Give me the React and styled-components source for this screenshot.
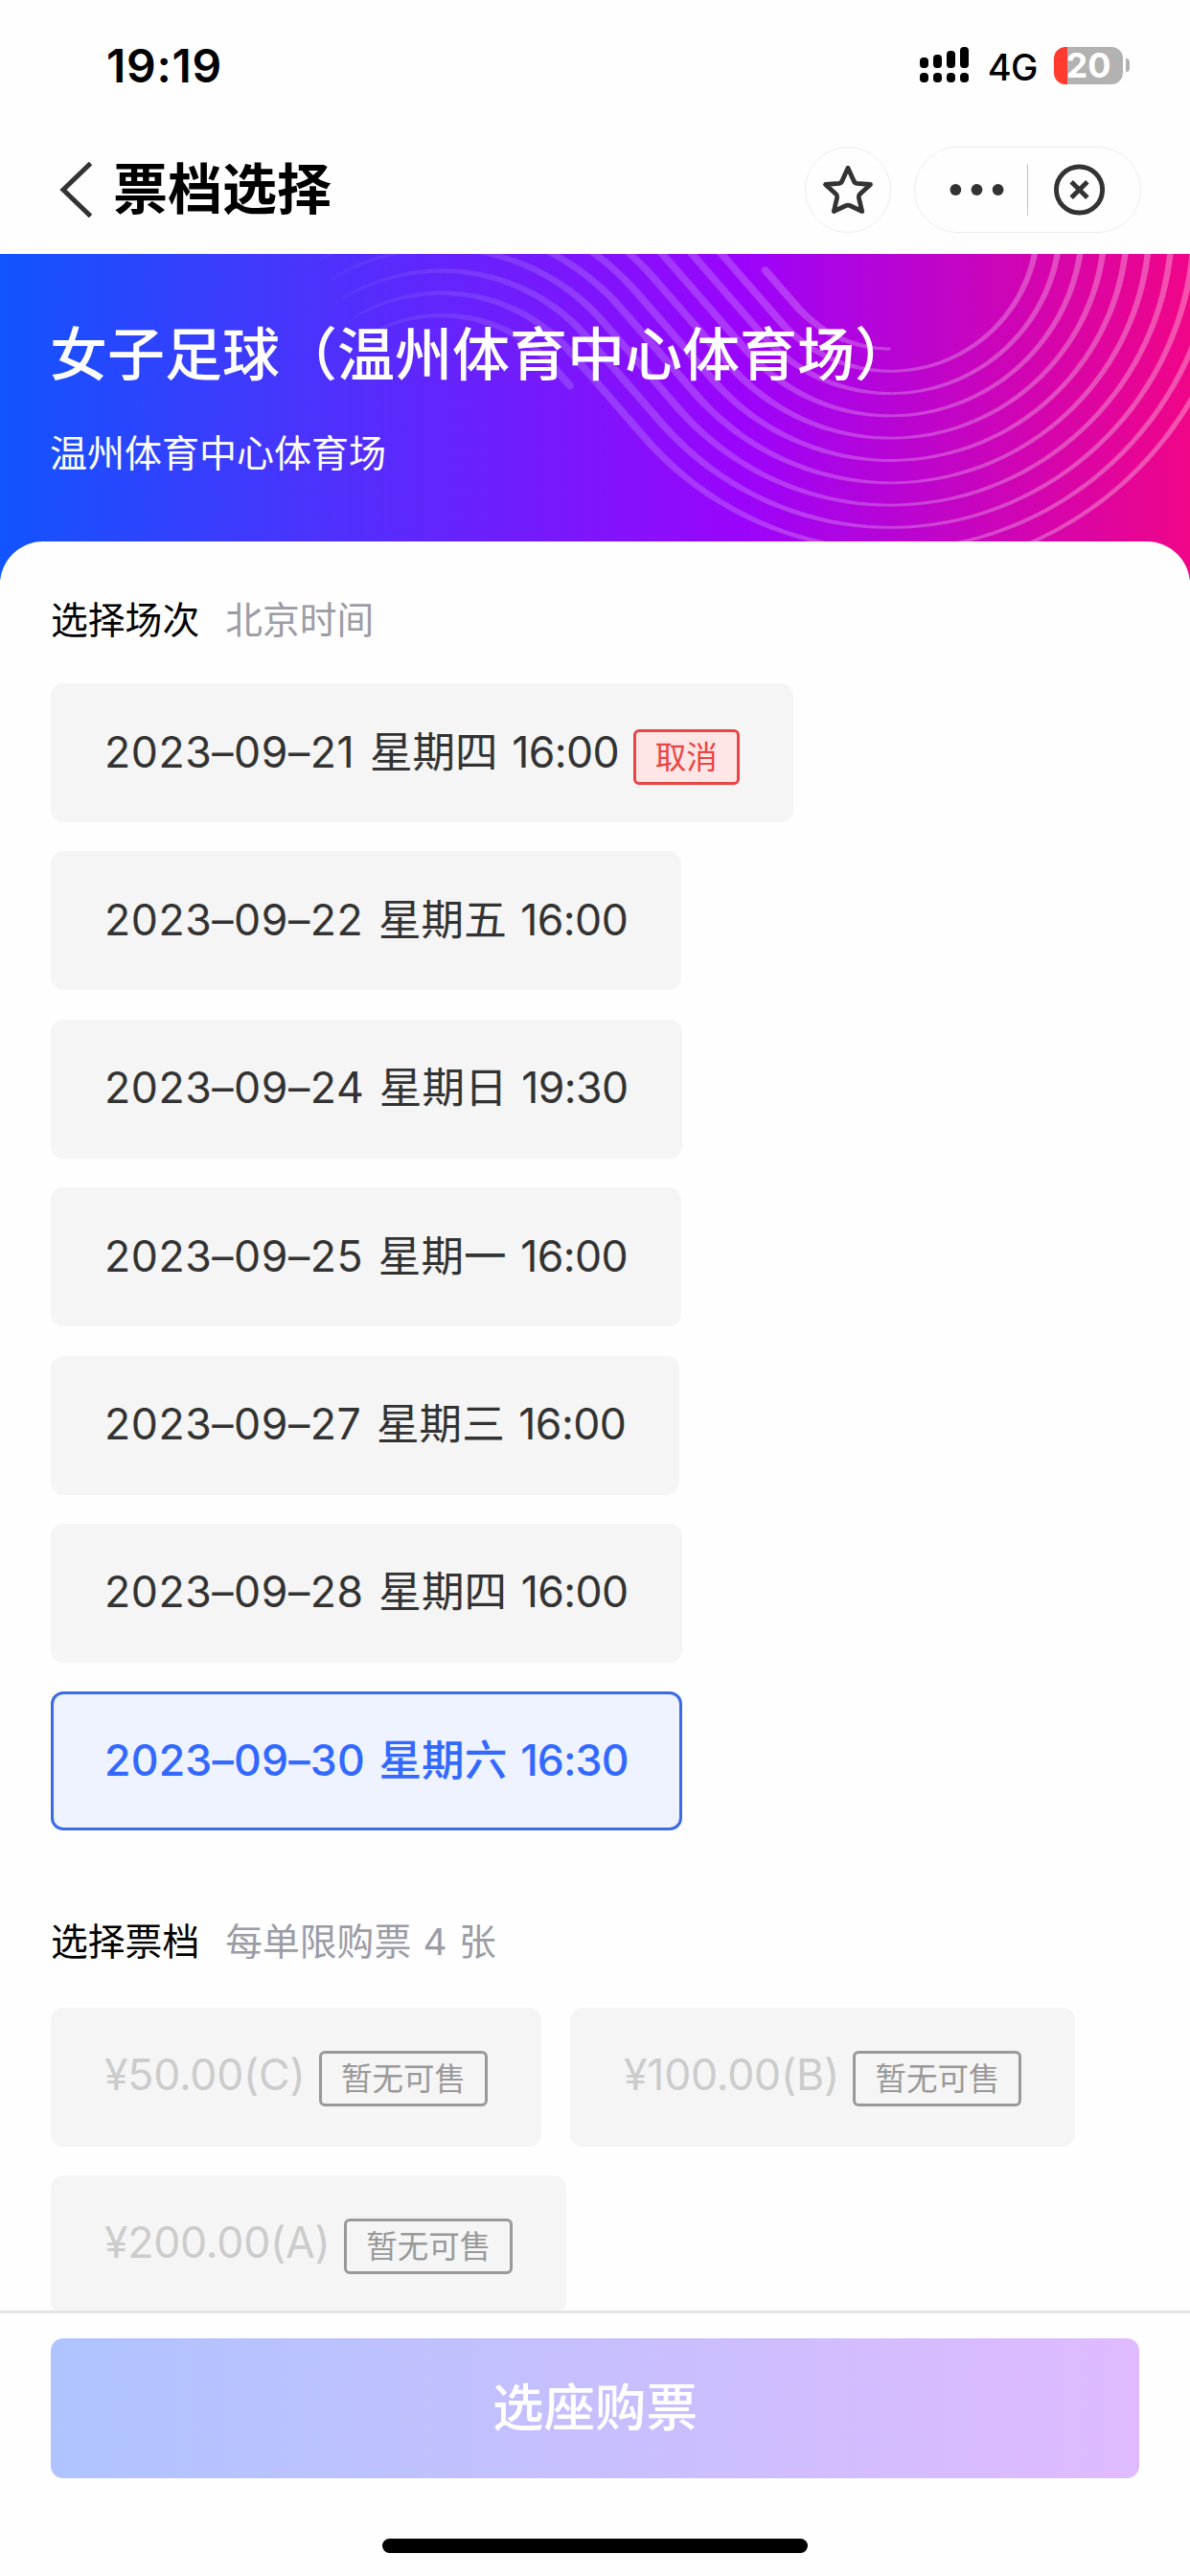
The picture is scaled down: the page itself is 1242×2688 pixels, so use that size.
import React, { useState } from "react";
import styled, { createGlobalStyle, css } from "styled-components";

const GlobalStyle = createGlobalStyle`
  * {
    box-sizing: border-box;
  }

  body {
    margin: 0;
    background: #fefefe;
    font-family: Inter, "Noto Sans CJK SC", sans-serif;
  }
`;

const Page = styled.div`
  width: 1242px;
  height: 2688px;
  display: flex;
  flex-direction: column;
  overflow: hidden;
  background: #fefefe;
`;

// status bar

const StatusBar = styled.div`
  height: 136px;
  flex: none;
  display: flex;
  justify-content: space-between;
  align-items: center;
  padding: 0 63px 0 111px;
`;

const Time = styled.div`
  font-size: 48px;
  font-weight: 600;
  letter-spacing: 0.7px;
  color: #000;
`;

const StatusIcons = styled.div`
  display: flex;
  align-items: center;
`;

const Network = styled.div`
  margin: 3px 17px 0 19px;
  font-size: 38px;
  font-weight: 500;
  letter-spacing: -0.5px;
  color: #000;
`;

const Battery = styled.div`
  width: 72px;
  height: 39px;
  border-radius: 12px;
  display: flex;
  align-items: center;
  justify-content: center;
  background: linear-gradient(90deg, #ff3b30 14px, #b2b2b2 14px);
  color: #fff;
  font-size: 36px;
  font-weight: 700;
`;

const BatteryCap = styled.div`
  width: 4px;
  height: 14px;
  margin-left: 3px;
  border-radius: 0 4px 4px 0;
  background: #b2b2b2;
`;

// title bar

const NavBar = styled.div`
  height: 129px;
  flex: none;
  display: flex;
  align-items: center;
  padding: 0 51px 5px 62px;
`;

const NavTitle = styled.div`
  flex: 1;
  margin-left: 19px;
  font-size: 57px;
  font-weight: 700;
  line-height: 80px;
  color: #000;
`;

const RoundButton = styled.div`
  width: 90px;
  height: 90px;
  margin-right: 24px;
  border: 1px solid #ededed;
  border-radius: 45px;
  display: flex;
  align-items: center;
  justify-content: center;
`;

const Capsule = styled.div`
  width: 237px;
  height: 90px;
  border: 1px solid #ededed;
  border-radius: 45px;
  display: flex;
  align-items: center;
  padding: 0 37px 0 36px;
`;

const CapsuleLine = styled.div`
  width: 1px;
  height: 54px;
  margin: 0 27px 0 24px;
  background: #c4c4c4;
`;

// banner

const Banner = styled.div`
  height: 340px;
  flex: none;
  position: relative;
  padding: 69px 52px 0;
  color: #fff;
  background: linear-gradient(90deg, #1154ff 0%, #9b04fb 62.5%, #f00587 100%);
`;

const Waves = styled.svg`
  position: absolute;
  top: 0;
  left: 0;
`;

const EventName = styled.div`
  position: relative;
  font-size: 60px;
  font-weight: 500;
  line-height: 72px;
`;

const Venue = styled.div`
  position: relative;
  margin-top: 41px;
  font-size: 39px;
  line-height: 52px;
`;

// content

const Sheet = styled.div`
  flex: 1;
  min-height: 0;
  overflow: hidden;
  position: relative;
  margin-top: -40px;
  padding: 54px 53px 0;
  border-radius: 45px 45px 0 0;
  background: #fefefe;
`;

const SectionHead = styled.div`
  height: 56px;
  display: flex;
  align-items: center;
  padding-bottom: 6px;
  margin-bottom: ${({ $gap }) => $gap}px;
  font-size: 38.8px;
  color: #000;
`;

const Hint = styled.span`
  margin-left: 27px;
  word-spacing: 1.5px;
  color: #9c9ca6;
`;

const Options = styled.div`
  display: flex;
  flex-flow: ${({ $column }) => ($column ? "column" : "row wrap")};
  align-items: flex-start;
  gap: 30.4px 30px;
`;

const Option = styled.div`
  height: 145px;
  display: flex;
  align-items: center;
  padding: 0 56px;
  border-radius: 13px;
  background: #f5f5f5;
  color: #333;
  font-size: 44.6px;
  white-space: pre;

  ${({ $selected }) =>
    $selected &&
    css`
      padding: 0 53px;
      border: 3px solid #3b6ae6;
      background: #eef3ff;
      color: #3369ff;
      font-weight: 500;
    `}

  ${({ $soldOut }) =>
    $soldOut &&
    css`
      color: #ccc;
    `}
`;

const Price = styled.span`
  padding-bottom: 5px;
  letter-spacing: -0.25px;
`;

const Session = styled.span`
  display: flex;
  align-items: baseline;
  padding-bottom: 9px;
`;

const DateText = styled.span`
  letter-spacing: ${({ $selected }) => ($selected ? 0.2 : 0.55)}px;
`;

const Clock = styled.span`
  margin-left: 2px;
  letter-spacing: ${({ $selected }) => ($selected ? -0.9 : -0.6)}px;
`;

const Day = styled.span`
  margin-left: 2.5px;
`;

const Tag = styled.span`
  height: 58px;
  display: flex;
  align-items: center;
  margin: ${({ $cancel }) => ($cancel ? 9 : 3)}px 0 0 14.5px;
  padding: 0 20px 5px;
  border: 3px solid ${({ $cancel }) => ($cancel ? "#ea4444" : "#999")};
  border-radius: 6px;
  background: ${({ $cancel }) => ($cancel ? "#ffe6e6" : "transparent")};
  color: ${({ $cancel }) => ($cancel ? "#ea4444" : "#999")};
  font-size: 32.5px;
`;

const Section = styled.div`
  margin-bottom: 87.500px;
`;

// footer

const Footer = styled.div`
  height: 277px;
  flex: none;
  display: flex;
  flex-direction: column;
  align-items: center;
  padding: 26px 53px 0;
  border-top: 3px solid #e4e4e4;
  background: #fefefe;
`;

const BuyButton = styled.div`
  width: 1136px;
  height: 146px;
  display: flex;
  align-items: center;
  justify-content: center;
  padding-bottom: 9px;
  border-radius: 13px;
  background: linear-gradient(90deg, #afc4ff, #dfbaff);
  color: #fff;
  font-size: 53.5px;
  font-weight: 500;
`;

const HomeIndicator = styled.div`
  width: 444px;
  height: 15px;
  margin-top: 63px;
  border-radius: 8px;
  background: #000;
`;

const sessions = [
  { date: "2023–09–21", day: "星期四", time: "16:00", cancelled: true },
  { date: "2023–09–22", day: "星期五", time: "16:00" },
  { date: "2023–09–24", day: "星期日", time: "19:30" },
  { date: "2023–09–25", day: "星期一", time: "16:00" },
  { date: "2023–09–27", day: "星期三", time: "16:00" },
  { date: "2023–09–28", day: "星期四", time: "16:00" },
  { date: "2023–09–30", day: "星期六", time: "16:30" },
];

const prices = ["¥50.00(C)", "¥100.00(B)", "¥200.00(A)"];

// the lines of the banner: two families of circles joined by their common tangents

const STEP = 23.3;
const R0 = 130.3;
const LEFT = { x: 461, y: 217.7 };
const RIGHT = { x: 929.5, y: -31.3 };
const N = -41.2;
const rad = (deg) => (deg * Math.PI) / 180;

const circlePoint = (c, r, deg, width) => ({
  x: c.x + r * Math.cos(rad(deg)),
  y: c.y + r * Math.sin(rad(deg)),
  w: width,
});

const leftArc = (r) => {
  const points = [];
  for (let i = 0; i <= 40; i++) {
    const t = i / 40;
    points.push(circlePoint(LEFT, r, -121 + t * (N + 121), 2.4 + 5.4 * t));
  }
  return points;
};

const rightArc = (r, from, to) => {
  const points = [];
  for (let i = 0; i <= 60; i++) {
    const a = from + ((to - from) * i) / 60;
    const w = a > 90 ? 2.8 + (5 * (a - 90)) / 49 : 2.8 + (4 * (90 - a)) / 90;
    points.push(circlePoint(RIGHT, r, a, w));
  }
  return points;
};

const ribbon = (points, capStart, capEnd) => {
  const one = [];
  const two = [];
  const cap = (p, dir) => {
    const out = [];
    for (let i = 1; i < 8; i++) {
      const a = dir + Math.PI / 2 - (Math.PI * i) / 8;
      out.push([p.x + (p.w / 2) * Math.cos(a), p.y + (p.w / 2) * Math.sin(a)]);
    }
    return out;
  };
  points.forEach((p, i) => {
    const a = points[Math.max(0, i - 1)];
    const b = points[Math.min(points.length - 1, i + 1)];
    const len = Math.hypot(b.x - a.x, b.y - a.y);
    const nx = (-(b.y - a.y) / len) * (p.w / 2);
    const ny = ((b.x - a.x) / len) * (p.w / 2);
    one.push([p.x + nx, p.y + ny]);
    two.unshift([p.x - nx, p.y - ny]);
  });
  const last = points[points.length - 1];
  const all = [
    ...one,
    ...(capEnd ? cap(last, rad(N + 90)) : []),
    ...two,
    ...(capStart ? cap(points[0], rad(N - 90)) : []),
  ];
  return "M" + all.map(([x, y]) => x.toFixed(1) + " " + y.toFixed(1)).join("L") + "Z";
};

const along = (p, s) => ({
  x: p.x + s * Math.cos(rad(N + 90)),
  y: p.y + s * Math.sin(rad(N + 90)),
  w: p.w,
});

const waveLines = () => {
  const lines = [];
  const inner = rightArc(R0, 180 + N, 90);
  lines.push(ribbon([along(inner[0], -50), ...inner], true, false));
  for (let k = 1; k <= 9; k++) {
    lines.push(
      ribbon([
        ...leftArc(R0 + STEP * (11 - k)),
        ...rightArc(R0 + STEP * k, 180 + N, -10),
      ])
    );
  }
  const small = leftArc(R0 + STEP);
  lines.push(ribbon([...small, along(small[small.length - 1], 28)], false, true));
  lines.push(ribbon(rightArc(R0 + STEP * 10, 90, -10)));
  return lines;
};

const BannerWaves = () => (
  <Waves width="1242" height="340" viewBox="0 0 1242 340">
    <defs>
      <linearGradient id="fade" gradientUnits="userSpaceOnUse" x1="330" y1="0" x2="1242" y2="0">
        <stop offset="0" stopColor="#fff" stopOpacity="0.03" />
        <stop offset="0.3" stopColor="#fff" stopOpacity="0.16" />
        <stop offset="1" stopColor="#fff" stopOpacity="0.31" />
      </linearGradient>
    </defs>
    {waveLines().map((d, index) => (
      <path key={index} d={d} fill="url(#fade)" />
    ))}
  </Waves>
);

const Signal = () => (
  <svg width="52" height="38" viewBox="0 0 52 38">
    {[11, 8, 4, 0].map((top, i) => (
      <g key={i}>
        <rect x={i * 14} y={top} width="9" height={22 - top} rx="4" />
        <rect x={i * 14} y="27" width="9" height="10" rx="4" />
      </g>
    ))}
  </svg>
);

const BackIcon = () => (
  <svg width="37" height="58" viewBox="0 0 37 58" fill="none">
    <path d="M32.5 1.5 4 29l28.500 27.500" stroke="#333" strokeWidth="5" />
  </svg>
);

const StarIcon = () => (
  <svg width="54" height="54" viewBox="0 0 54 54" fill="none">
    <path
      d="M27 4.200 33 17.500Q34 20 36.200 20.300L50.500 21.500 39.500 31.500Q38 33 38.300 35L41.700 49.500 29 43.500Q27 42.600 25 43.500L12.300 49.500 15.700 35Q16 33 14.500 31.500L3.500 21.500 17.800 20.300Q20 20 21 17.500Z"
      stroke="#333"
      strokeWidth="4.800"
      strokeLinejoin="round"
    />
  </svg>
);

const MoreIcon = () => (
  <svg width="58" height="14" viewBox="0 0 58 14" fill="#333">
    <circle cx="6.5" cy="7" r="6" />
    <circle cx="29" cy="7" r="6" />
    <circle cx="51.5" cy="7" r="6" />
  </svg>
);

const CloseIcon = () => (
  <svg width="54" height="54" viewBox="0 0 54 54" fill="none" stroke="#333">
    <circle cx="27" cy="27" r="24.500" strokeWidth="5" />
    <path d="M18.500 18.500l17 17M35.500 18.500l-17 17" strokeWidth="5" />
  </svg>
);

const App = () => {
  const [selected, setSelected] = useState(6);

  return (
    <>
      <GlobalStyle />
      <Page>
        <StatusBar>
          <Time>19:19</Time>
          <StatusIcons>
            <Signal />
            <Network>4G</Network>
            <Battery>20</Battery>
            <BatteryCap />
          </StatusIcons>
        </StatusBar>
        <NavBar>
          <BackIcon />
          <NavTitle>票档选择</NavTitle>
          <RoundButton>
            <StarIcon />
          </RoundButton>
          <Capsule>
            <MoreIcon />
            <CapsuleLine />
            <CloseIcon />
          </Capsule>
        </NavBar>
        <Banner>
          <BannerWaves />
          <EventName>女子足球（温州体育中心体育场）</EventName>
          <Venue>温州体育中心体育场</Venue>
        </Banner>
        <Sheet>
          <Section>
            <SectionHead $gap={38}>
              选择场次<Hint>北京时间</Hint>
            </SectionHead>
            <Options $column>
              {sessions.map((item, index) => (
                <Option
                  key={item.date}
                  $selected={index === selected}
                  onClick={() => !item.cancelled && setSelected(index)}
                >
                  <Session>
                    <DateText $selected={index === selected}>{item.date} </DateText>
                    <Day>{item.day} </Day>
                    <Clock $selected={index === selected}>{item.time}</Clock>
                  </Session>
                  {item.cancelled && <Tag $cancel>取消</Tag>}
                </Option>
              ))}
            </Options>
          </Section>
          <SectionHead $gap={41}>
            选择票档<Hint>每单限购票 4 张</Hint>
          </SectionHead>
          <Options>
            {prices.map((price) => (
              <Option key={price} $soldOut>
                <Price>{price}</Price>
                <Tag>暂无可售</Tag>
              </Option>
            ))}
          </Options>
        </Sheet>
        <Footer>
          <BuyButton>选座购票</BuyButton>
          <HomeIndicator />
        </Footer>
      </Page>
    </>
  );
};

export default App;
